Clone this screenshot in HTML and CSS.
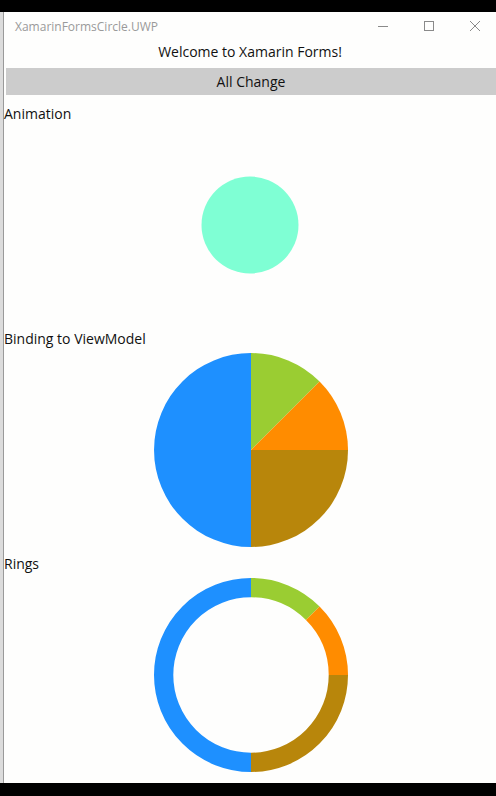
FILE: index.html
```html
<!DOCTYPE html>
<html>
<head>
<meta charset="utf-8">
<link rel="stylesheet" href="styles.css">
</head>
<body>
<div class="window">
  <div class="edge"></div>
  <div class="app">
    <div class="titlebar">
      <span class="apptitle">XamarinFormsCircle.UWP</span>
      <div class="controls">
        <svg class="ctl" width="12" height="12" viewBox="0 0 12 12"><path d="M1 6.5H11" stroke="#8a8a8a" stroke-width="1"/></svg>
        <svg class="ctl" width="12" height="12" viewBox="0 0 12 12"><rect x="1.5" y="1.5" width="9" height="9" fill="none" stroke="#8a8a8a" stroke-width="1"/></svg>
        <svg class="ctl" width="12" height="12" viewBox="0 0 12 12"><path d="M1 1L11 11M11 1L1 11" stroke="#8a8a8a" stroke-width="1"/></svg>
      </div>
    </div>
    <div class="welcome">Welcome to Xamarin Forms!</div>
    <div class="button">All Change</div>

    <div class="label">Animation</div>
    <div class="chart">
      <svg width="194" height="194" viewBox="0 0 194 194">
        <circle cx="96" cy="97" r="48.5" fill="#7FFFD4"/>
      </svg>
    </div>

    <div class="label">Binding to ViewModel</div>
    <div class="chart">
      <svg width="194" height="194" viewBox="0 0 194 194">
        <path d="M97 97L97 0A97 97 0 0 1 165.59 28.41Z" fill="#9ACD32"/>
        <path d="M97 97L165.59 28.41A97 97 0 0 1 194 97Z" fill="#FF8C00"/>
        <path d="M97 97L194 97A97 97 0 0 1 97 194Z" fill="#B8860B"/>
        <path d="M97 97L97 194A97 97 0 0 1 97 0Z" fill="#1E90FF"/>
      </svg>
    </div>

    <div class="label">Rings</div>
    <div class="chart">
      <svg width="194" height="194" viewBox="0 0 194 194" fill="none" stroke-width="19.3">
        <path d="M97 9.65A87.35 87.35 0 0 1 158.77 35.23" stroke="#9ACD32"/>
        <path d="M158.77 35.23A87.35 87.35 0 0 1 184.35 97" stroke="#FF8C00"/>
        <path d="M184.35 97A87.35 87.35 0 0 1 97 184.35" stroke="#B8860B"/>
        <path d="M97 184.35A87.35 87.35 0 0 1 97 9.65" stroke="#1E90FF"/>
      </svg>
    </div>
  </div>
</div>
</body>
</html>
```
FILE: styles.css
```css
html, body {
  margin: 0;
  padding: 0;
  background: #000;
}
body {
  font-family: "Open Sans", "Noto Sans", sans-serif;
  color: #111;
}
.window {
  margin-top: 12px;
  height: 771px;
  display: flex;
  overflow: hidden;
  background: #fefefd;
}
.edge {
  width: 3px;
  flex: none;
  background: #dcdcdc;
  border-right: 1px solid #9a9a9a;
}
.app {
  flex: 1;
  display: flex;
  flex-direction: column;
}
.titlebar {
  height: 28px;
  display: flex;
  align-items: center;
  justify-content: space-between;
}
.apptitle {
  margin-left: 11px;
  font-size: 12px;
  color: #9a9a9a;
  margin-top: 1px;
}
.controls {
  display: flex;
  align-items: center;
  gap: 34px;
  margin-right: 15px;
}
.ctl {
  display: block;
}
.welcome {
  height: 22px;
  line-height: 22px;
  margin-top: 1px;
  margin-bottom: 5px;
  text-align: center;
  font-size: 14px;
}
.button {
  margin-left: 2px;
  height: 27px;
  box-sizing: border-box;
  padding-top: 1px;
  line-height: 26px;
  background: #cccccc;
  text-align: center;
  font-size: 14px;
}
.label {
  height: 20px;
  line-height: 20px;
  font-size: 14px;
  margin-top: 9px;
}
.label + .chart + .label {
  margin-top: 7px;
}
.chart {
  display: flex;
  justify-content: center;
  padding-left: 2px;
  margin-top: 4px;
}
.chart svg {
  display: block;
}
```
